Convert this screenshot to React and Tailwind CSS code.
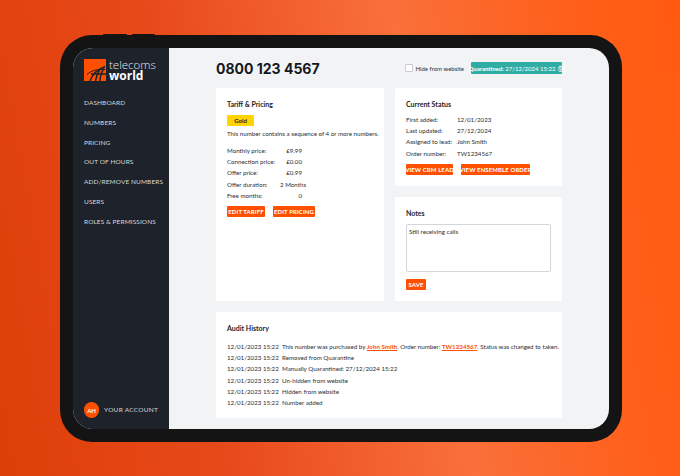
const navItems = ["Dashboard", "Numbers", "Pricing", "Out of hours", "Add/remove numbers", "Users", "Roles & permissions"];

const pricing = [
  ["Monthly price:", "£9.99"],
  ["Connection price:", "£0.00"],
  ["Offer price:", "£0.99"],
  ["Offer duration:", "2 Months"],
  ["Free months:", "0"],
];

const status = [
  ["First added:", "12/01/2023"],
  ["Last updated:", "27/12/2024"],
  ["Assigned to lead:", "John Smith"],
  ["Order number:", "TW1234567"],
];

const audit = [
  "Removed from Quarantine",
  "Manually Quarantined: 27/12/2024 15:22",
  "Un-hidden from website",
  "Hidden from website",
  "Number added",
];

function Logo() {
  return (
    <div className="flex items-center gap-[3px]">
      <svg width="22" height="22" viewBox="0 0 22 22" className="shrink-0">
        <rect width="22" height="22" fill="#ff5000" />
        <g fill="none" stroke="#1d222b" strokeWidth="1.5">
          <path d="M6 22 C8 16 12 11 21 7.5" />
          <path d="M3 15.5 C7 12 12 10 21 10.5" strokeWidth="1" />
          <path d="M7 15 H22" />
          <path d="M11.5 22 C12 18 13 15 16 10" />
          <path d="M16 22 C16 18 17 14 20 9" />
        </g>
      </svg>
      <div className="flex flex-col font-['Open_Sans',sans-serif] text-[11.5px] leading-[11px] text-white">
        <span className="font-light text-[#e4e6e8]">telecoms</span>
        <span className="font-bold text-[12px]">world</span>
      </div>
    </div>
  );
}

function Sidebar() {
  return (
    <aside className="w-[96px] shrink-0 bg-[#1d222b] flex flex-col justify-between px-[11px] pt-[11px] pb-[11px]">
      <div>
        <Logo />
        <nav className="mt-[12px] flex flex-col">
          {navItems.map((item) => (
            <div key={item} className="h-[19.8px] flex items-center text-[6.5px] uppercase tracking-[0.1px] text-[#d5d8dc] whitespace-nowrap">
              {item}
            </div>
          ))}
        </nav>
      </div>
      <div className="flex items-center gap-[5px]">
        <div className="w-[16px] h-[16px] rounded-full bg-[#ff5000] flex items-center justify-center text-white text-[6px] font-bold">AH</div>
        <span className="text-[6.5px] uppercase tracking-[0.25px] text-[#d5d8dc] whitespace-nowrap">Your account</span>
      </div>
    </aside>
  );
}

function Button({ children, className }) {
  return (
    <button className={`h-[11px] flex items-center justify-center rounded-[1px] bg-[#ff5000] text-white text-[6px] font-bold uppercase tracking-[0.1px] whitespace-nowrap ${className}`}>
      {children}
    </button>
  );
}

function Card({ title, className, children }) {
  return (
    <section className={`bg-white rounded-[1px] p-[11px] ${className}`}>
      <h2 className="text-[7px] leading-[10px] font-bold text-[#1d222b]">{title}</h2>
      {children}
    </section>
  );
}

function Row({ label, value, labelWidth, right }) {
  return (
    <div className="flex h-[11.2px] items-center">
      <span className={labelWidth}>{label}</span>
      <span className={right ? "w-[22px] text-right whitespace-nowrap" : "whitespace-nowrap"}>{value}</span>
    </div>
  );
}

export default function App() {
  return (
    <div className="w-[680px] h-[476px] overflow-hidden pt-[35px] pl-[60px] bg-[linear-gradient(80deg,#dd3f08_0%,#e8491a_30%,#f9703a_62%,#ff5f1a_85%,#ff5a10_100%)] font-['Lato',sans-serif] text-[6.2px] text-[#2a2e35]">
      <div className="relative w-[562px] h-[407px] rounded-[32px] bg-[#141414] p-[13px]">
        <div className="absolute top-[-1px] left-[43px] w-[24px] h-[2px] rounded-t-[1px] bg-[#141414]" />
        <div className="absolute top-[-1px] left-[72px] w-[23px] h-[2px] rounded-t-[1px] bg-[#141414]" />
        <div className="flex h-[381px] rounded-[20px] overflow-hidden bg-[#f2f3f5]">
          <Sidebar />
          <main className="flex-1 px-[47px]">
            <header className="h-[40px] flex items-center justify-between">
              <h1 className="font-['Inter',sans-serif] text-[14px] font-bold text-[#15181e] whitespace-nowrap">0800 123 4567</h1>
              <div className="flex items-center">
                <span className="w-[8px] h-[8px] rounded-[1px] border border-[#c9cbd0] bg-white" />
                <span className="ml-[3px] text-[6px] whitespace-nowrap">Hide from website</span>
                <div className="ml-[7px] w-[91px] h-[12px] rounded-[1px] bg-[#2fada5] flex items-center justify-center gap-[2px] text-white text-[6px] whitespace-nowrap">
                  <span><b>Quarantined:</b> 27/12/2024 15:22</span>
                  <svg width="7" height="7" viewBox="0 0 24 24" fill="none" stroke="white" strokeWidth="2.5" className="shrink-0">
                    <rect x="3" y="5" width="18" height="17" rx="2" />
                    <path d="M3 10h18M8 2v5M16 2v5M7 14h10M7 18h10" />
                  </svg>
                </div>
              </div>
            </header>

            <div className="grid grid-cols-[168px_167px] gap-[11px]">
              <Card title="Tariff & Pricing" className="row-span-2">
                <div className="mt-[6px] w-[27px] h-[11px] rounded-[1px] bg-[#ffd400] flex items-center justify-center text-[6px] font-bold text-[#1d222b]">Gold</div>
                <p className="mt-[3px] leading-[10px] whitespace-nowrap">This number contains a sequence of 4 or more numbers.</p>
                <div className="mt-[6px]">
                  {pricing.map(([label, value]) => (
                    <Row key={label} label={label} value={value} labelWidth="w-[53px] whitespace-nowrap" right />
                  ))}
                </div>
                <div className="mt-[5px] flex gap-[8px]">
                  <Button className="w-[38px]">Edit tariff</Button>
                  <Button className="w-[42px]">Edit pricing</Button>
                </div>
              </Card>

              <Card title="Current Status" className="h-[98px]">
                <div className="mt-[5px]">
                  {status.map(([label, value]) => (
                    <Row key={label} label={label} value={value} labelWidth="w-[51px] whitespace-nowrap" />
                  ))}
                </div>
                <div className="mt-[5px] flex gap-[8px]">
                  <Button className="w-[47px]">View CRM lead</Button>
                  <Button className="w-[69px]">View ensemble order</Button>
                </div>
              </Card>

              <Card title="Notes" className="h-[104px]">
                <div className="mt-[6px] w-[145px] h-[48px] rounded-[2px] border border-[#d5d6d9] px-[2px] py-[3px] leading-[8px]">Still receiving calls</div>
                <Button className="mt-[7px] w-[20px]">Save</Button>
              </Card>

              <Card title="Audit History" className="col-span-2 h-[106px]">
                <div className="mt-[8px] grid grid-cols-[55px_1fr]">
                  <span className="h-[11.2px] flex items-center whitespace-nowrap">12/01/2023 15:22</span>
                  <span className="h-[11.2px] flex items-center whitespace-pre">
                    This number was purchased by <a className="font-bold text-[#ff5000] underline">John Smith</a>. Order number: <a className="font-bold text-[#ff5000] underline">TW1234567</a>. Status was changed to taken.
                  </span>
                  {audit.map((entry) => (
                    <div key={entry} className="contents">
                      <span className="h-[11.2px] flex items-center whitespace-nowrap">12/01/2023 15:22</span>
                      <span className="h-[11.2px] flex items-center whitespace-nowrap">{entry}</span>
                    </div>
                  ))}
                </div>
              </Card>
            </div>
          </main>
        </div>
      </div>
    </div>
  );
}
